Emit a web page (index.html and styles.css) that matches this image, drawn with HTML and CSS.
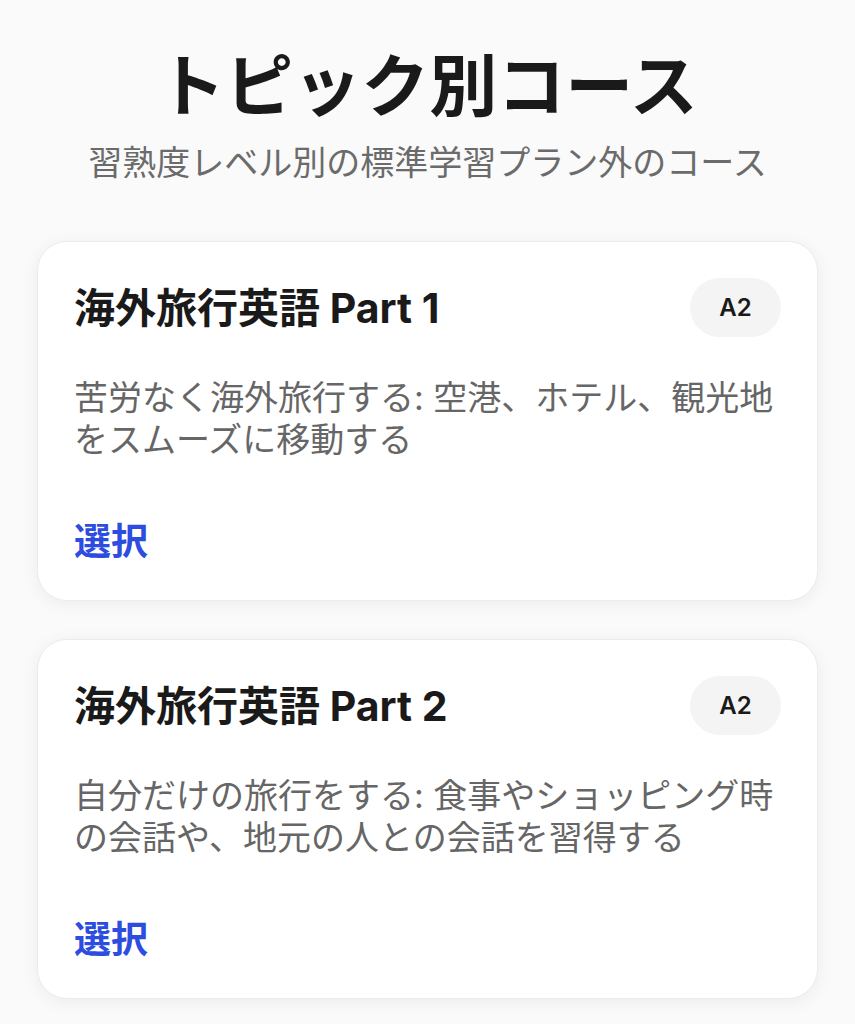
FILE: index.html
```html
<!DOCTYPE html>
<html lang="ja">
<head>
<meta charset="utf-8">
<link rel="stylesheet" href="styles.css">
</head>
<body>
<main class="page">
  <header class="head">
    <h1 class="title">トピック別コース</h1>
    <p class="subtitle">習熟度レベル別の標準学習プラン外のコース</p>
  </header>
  <section class="list">
    <article class="card">
      <div class="card-head">
        <h2 class="card-title">海外旅行英語 Part 1</h2>
        <span class="badge">A2</span>
      </div>
      <p class="card-desc">苦労なく海外旅行する: 空港、ホテル、観光地をスムーズに移動する</p>
      <a class="card-action">選択</a>
    </article>
    <article class="card">
      <div class="card-head">
        <h2 class="card-title">海外旅行英語 Part 2</h2>
        <span class="badge">A2</span>
      </div>
      <p class="card-desc">自分だけの旅行をする: 食事やショッピング時の会話や、地元の人との会話を習得する</p>
      <a class="card-action">選択</a>
    </article>
  </section>
</main>
</body>
</html>
```
FILE: styles.css
```css
* { box-sizing: border-box; }
html, body {
  margin: 0;
  padding: 0;
  background: #fafafa;
  font-family: Inter, "Noto Sans CJK JP", "Noto Sans", sans-serif;
}
.page {
  padding: 46px 37px 40px;
}
.head {
  text-align: center;
}
.title {
  margin: 0;
  font-size: 68px;
  line-height: 80px;
  font-weight: 700;
  color: #1a1a1a;
}
.subtitle {
  margin: 16px 0 0;
  font-size: 34px;
  line-height: 42px;
  color: #6b6b6b;
}
.list {
  margin-top: 57px;
  display: flex;
  flex-direction: column;
  gap: 38px;
}
.card {
  background: #fff;
  border-radius: 30px;
  border: 1px solid #ececec;
  box-shadow: 0 3px 18px rgba(0,0,0,0.06);
  padding: 36px 36px 36px;
  height: 360px;
}
.card-head {
  display: flex;
  align-items: center;
  justify-content: space-between;
  height: 59px;
}
.card-title {
  margin: 0;
  font-size: 41px;
  line-height: 50px;
  font-weight: 700;
  color: #1a1a1a;
}
.card-title .latin {
  letter-spacing: 0.5px;
}
.badge {
  width: 91px;
  height: 59px;
  border-radius: 30px;
  background: #f4f4f4;
  display: flex;
  align-items: center;
  justify-content: center;
  font-size: 24px;
  font-weight: 600;
  color: #1a1a1a;
}
.card-desc {
  margin: 40px 0 0;
  font-size: 34px;
  line-height: 42px;
  color: #666;
}
.card-action {
  display: block;
  margin-top: 59px;
  font-size: 37px;
  line-height: 44px;
  font-weight: 700;
  color: #2c4de0;
}
```
